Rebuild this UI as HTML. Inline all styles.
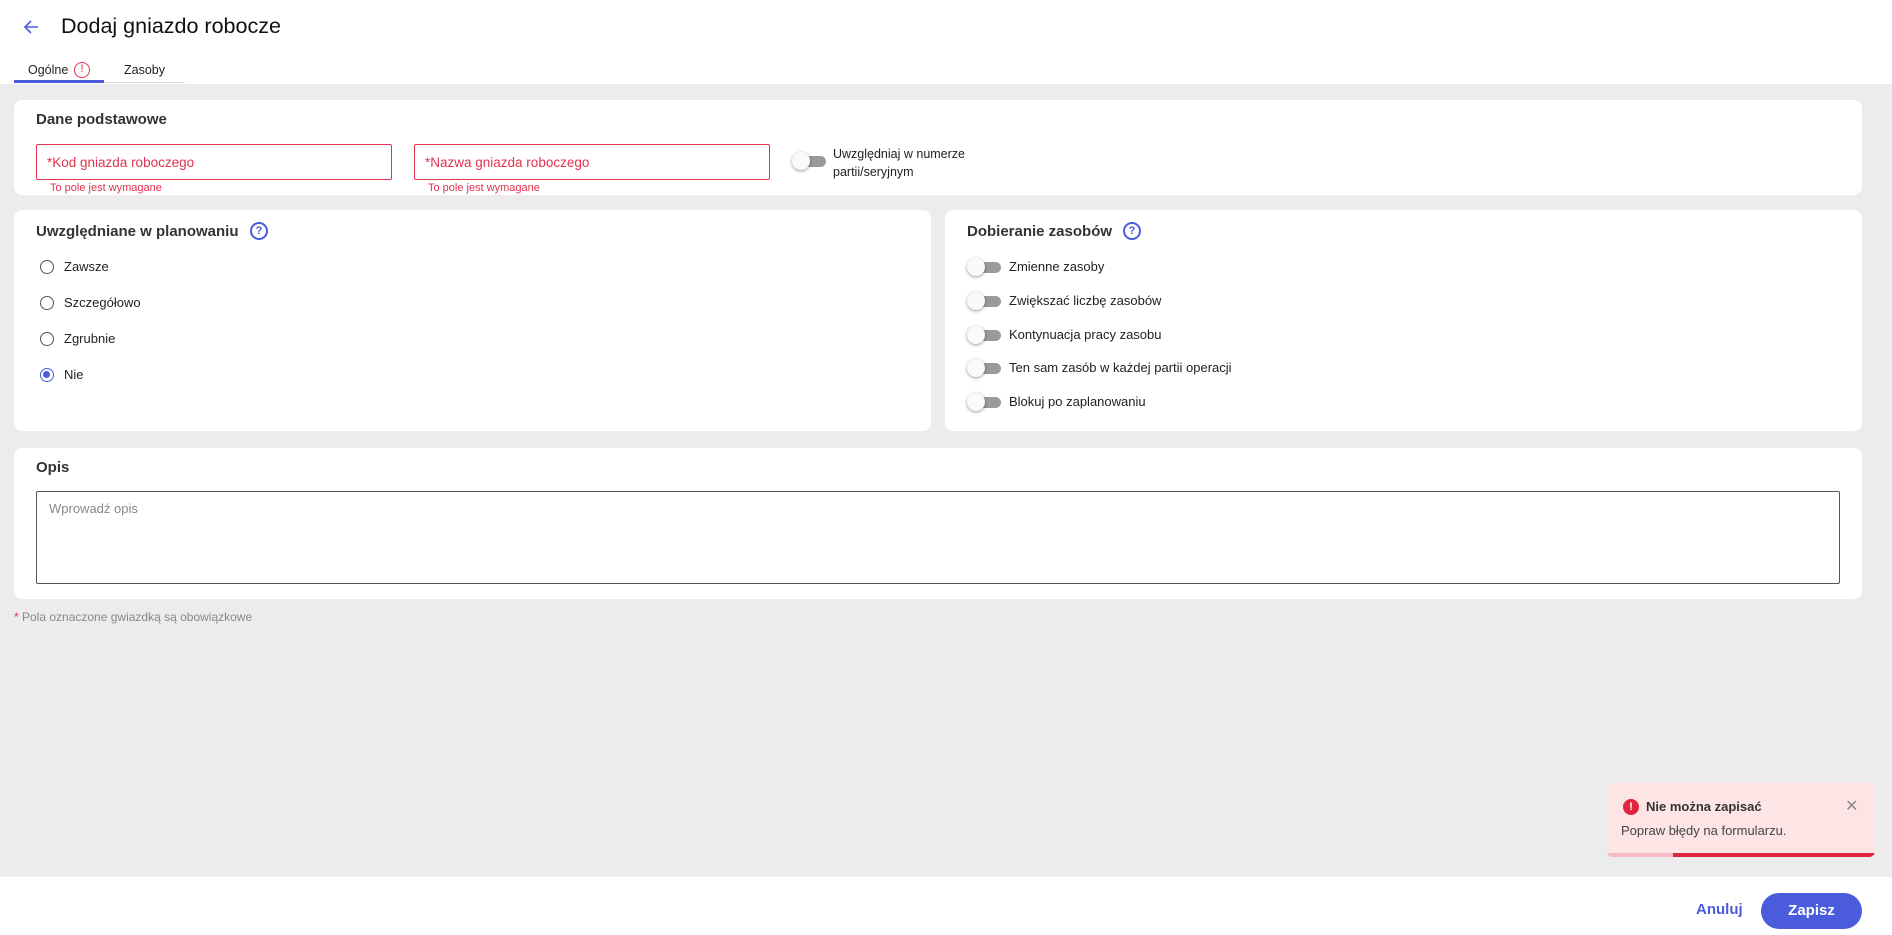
<!DOCTYPE html>
<html><head><meta charset="utf-8"><style>
*{box-sizing:border-box;margin:0;padding:0}
body{width:1892px;height:935px;background:#ececec;font-family:"Liberation Sans",sans-serif;color:#222;position:relative;overflow:hidden}
.a{position:absolute}
.card{position:absolute;background:#fff;border-radius:8px}
.h{font-size:15px;font-weight:bold;color:#333}
.inp{position:absolute;border:1px solid #e0334f;border-radius:2px;height:36px;font-size:13.5px;color:#e0334f;padding:10px 10px}
.err{position:absolute;font-size:11px;color:#e0334f}
.tg{position:absolute;width:34px;height:18px}
.tg:before{content:"";position:absolute;left:6px;top:4px;width:28px;height:11px;border-radius:6px;background:#9a9a9a}
.tg:after{content:"";position:absolute;left:0;top:0;width:18px;height:18px;border-radius:50%;background:#fafafa;box-shadow:0 1px 3px rgba(0,0,0,.4)}
.lbl{position:absolute;font-size:13px;color:#222}
.rd{position:absolute;width:14px;height:14px;border:1.5px solid #555;border-radius:50%}
.q{position:absolute;width:18px;height:18px;border:2px solid #4a5bdc;border-radius:50%;color:#4a5bdc;font-size:11px;font-weight:bold;text-align:center;line-height:14px}
</style></head><body>
<div class="a" style="left:0;top:0;width:1892px;height:84px;background:#fff"></div>
<svg class="a" style="left:21px;top:17px" width="20" height="20" viewBox="0 0 20 20"><path d="M17 10H4M10 4L4 10l6 6" fill="none" stroke="#4a5bdc" stroke-width="1.6"/></svg>
<div class="a" style="left:61px;top:14px;font-size:21.5px;color:#111">Dodaj gniazdo robocze</div>
<div class="a" style="left:28px;top:63px;font-size:12.5px;color:#222">Ogólne</div>
<div class="a" style="left:74px;top:62px;width:16px;height:16px;border:1.5px solid #e0334f;border-radius:50%;color:#e0334f;font-size:11px;text-align:center;line-height:13px">!</div>
<div class="a" style="left:124px;top:63px;font-size:12.5px;color:#222">Zasoby</div>
<div class="a" style="left:14px;top:80px;width:90px;height:3px;background:#4a5bdc"></div>
<div class="a" style="left:104px;top:82px;width:81px;height:1px;background:#ddd"></div>

<div class="card" style="left:14px;top:100px;width:1848px;height:95px"></div>
<div class="a h" style="left:36px;top:111px">Dane podstawowe</div>
<div class="inp" style="left:36px;top:144px;width:356px">*Kod gniazda roboczego</div>
<div class="err" style="left:50px;top:182px">To pole jest wymagane</div>
<div class="inp" style="left:414px;top:144px;width:356px">*Nazwa gniazda roboczego</div>
<div class="err" style="left:428px;top:182px">To pole jest wymagane</div>
<div class="tg" style="left:792px;top:152px"></div>
<div class="lbl" style="left:833px;top:145px;line-height:18px;font-size:12.5px">Uwzględniaj w numerze<br>partii/seryjnym</div>

<div class="card" style="left:14px;top:210px;width:917px;height:221px"></div>
<div class="a h" style="left:36px;top:223px">Uwzględniane w planowaniu</div>
<div class="q" style="left:250px;top:222px">?</div>
<div class="rd" style="left:40px;top:260px"></div><div class="lbl" style="left:64px;top:259px">Zawsze</div>
<div class="rd" style="left:40px;top:296px"></div><div class="lbl" style="left:64px;top:295px">Szczegółowo</div>
<div class="rd" style="left:40px;top:332px"></div><div class="lbl" style="left:64px;top:331px">Zgrubnie</div>
<div class="rd" style="left:40px;top:368px;border-color:#4a5bdc"><div style="margin:2px;width:7px;height:7px;border-radius:50%;background:#4a5bdc"></div></div><div class="lbl" style="left:64px;top:367px">Nie</div>

<div class="card" style="left:945px;top:210px;width:917px;height:221px"></div>
<div class="a h" style="left:967px;top:223px">Dobieranie zasobów</div>
<div class="q" style="left:1123px;top:222px">?</div>
<div class="tg" style="left:967px;top:258px"></div><div class="lbl" style="left:1009px;top:259px">Zmienne zasoby</div>
<div class="tg" style="left:967px;top:292px"></div><div class="lbl" style="left:1009px;top:293px">Zwiększać liczbę zasobów</div>
<div class="tg" style="left:967px;top:326px"></div><div class="lbl" style="left:1009px;top:327px">Kontynuacja pracy zasobu</div>
<div class="tg" style="left:967px;top:359px"></div><div class="lbl" style="left:1009px;top:360px">Ten sam zasób w każdej partii operacji</div>
<div class="tg" style="left:967px;top:393px"></div><div class="lbl" style="left:1009px;top:394px">Blokuj po zaplanowaniu</div>

<div class="card" style="left:14px;top:448px;width:1848px;height:151px"></div>
<div class="a h" style="left:36px;top:459px">Opis</div>
<div class="a" style="left:36px;top:491px;width:1804px;height:93px;border:1px solid #555;border-radius:2px;padding:9px 12px;font-size:13px;color:#888">Wprowadź opis</div>
<div class="a" style="left:14px;top:610px;font-size:12px;color:#888"><span style="color:#e0334f">*</span> Pola oznaczone gwiazdką są obowiązkowe</div>

<div class="a" style="left:0;top:877px;width:1892px;height:58px;background:#fff"></div>
<div class="a" style="left:1607px;top:782px;width:268px;height:75px;background:#fde5e5;border-radius:6px;overflow:hidden">
<div class="a" style="left:16px;top:17px;width:16px;height:16px;border-radius:50%;background:#e0263f;color:#fff;font-size:11px;font-weight:bold;text-align:center;line-height:16px">!</div>
<div class="a" style="left:39px;top:17px;font-size:13px;font-weight:bold;color:#333">Nie można zapisać</div>
<div class="a" style="left:238px;top:14px;font-size:16px;color:#888">✕</div>
<div class="a" style="left:14px;top:41px;font-size:13px;color:#444">Popraw błędy na formularzu.</div>
<div class="a" style="left:0;top:71px;width:268px;height:4px;background:#f7b9c3"></div>
<div class="a" style="left:66px;top:71px;width:202px;height:4px;background:#e0263f"></div>
</div>
<div class="a" style="left:1696px;top:901px;font-size:15px;font-weight:bold;color:#4a5bdc">Anuluj</div>
<div class="a" style="left:1761px;top:893px;width:101px;height:36px;border-radius:18px;background:#4a5bdc;color:#fff;font-size:15px;font-weight:bold;text-align:center;line-height:36px">Zapisz</div>
</body></html>
